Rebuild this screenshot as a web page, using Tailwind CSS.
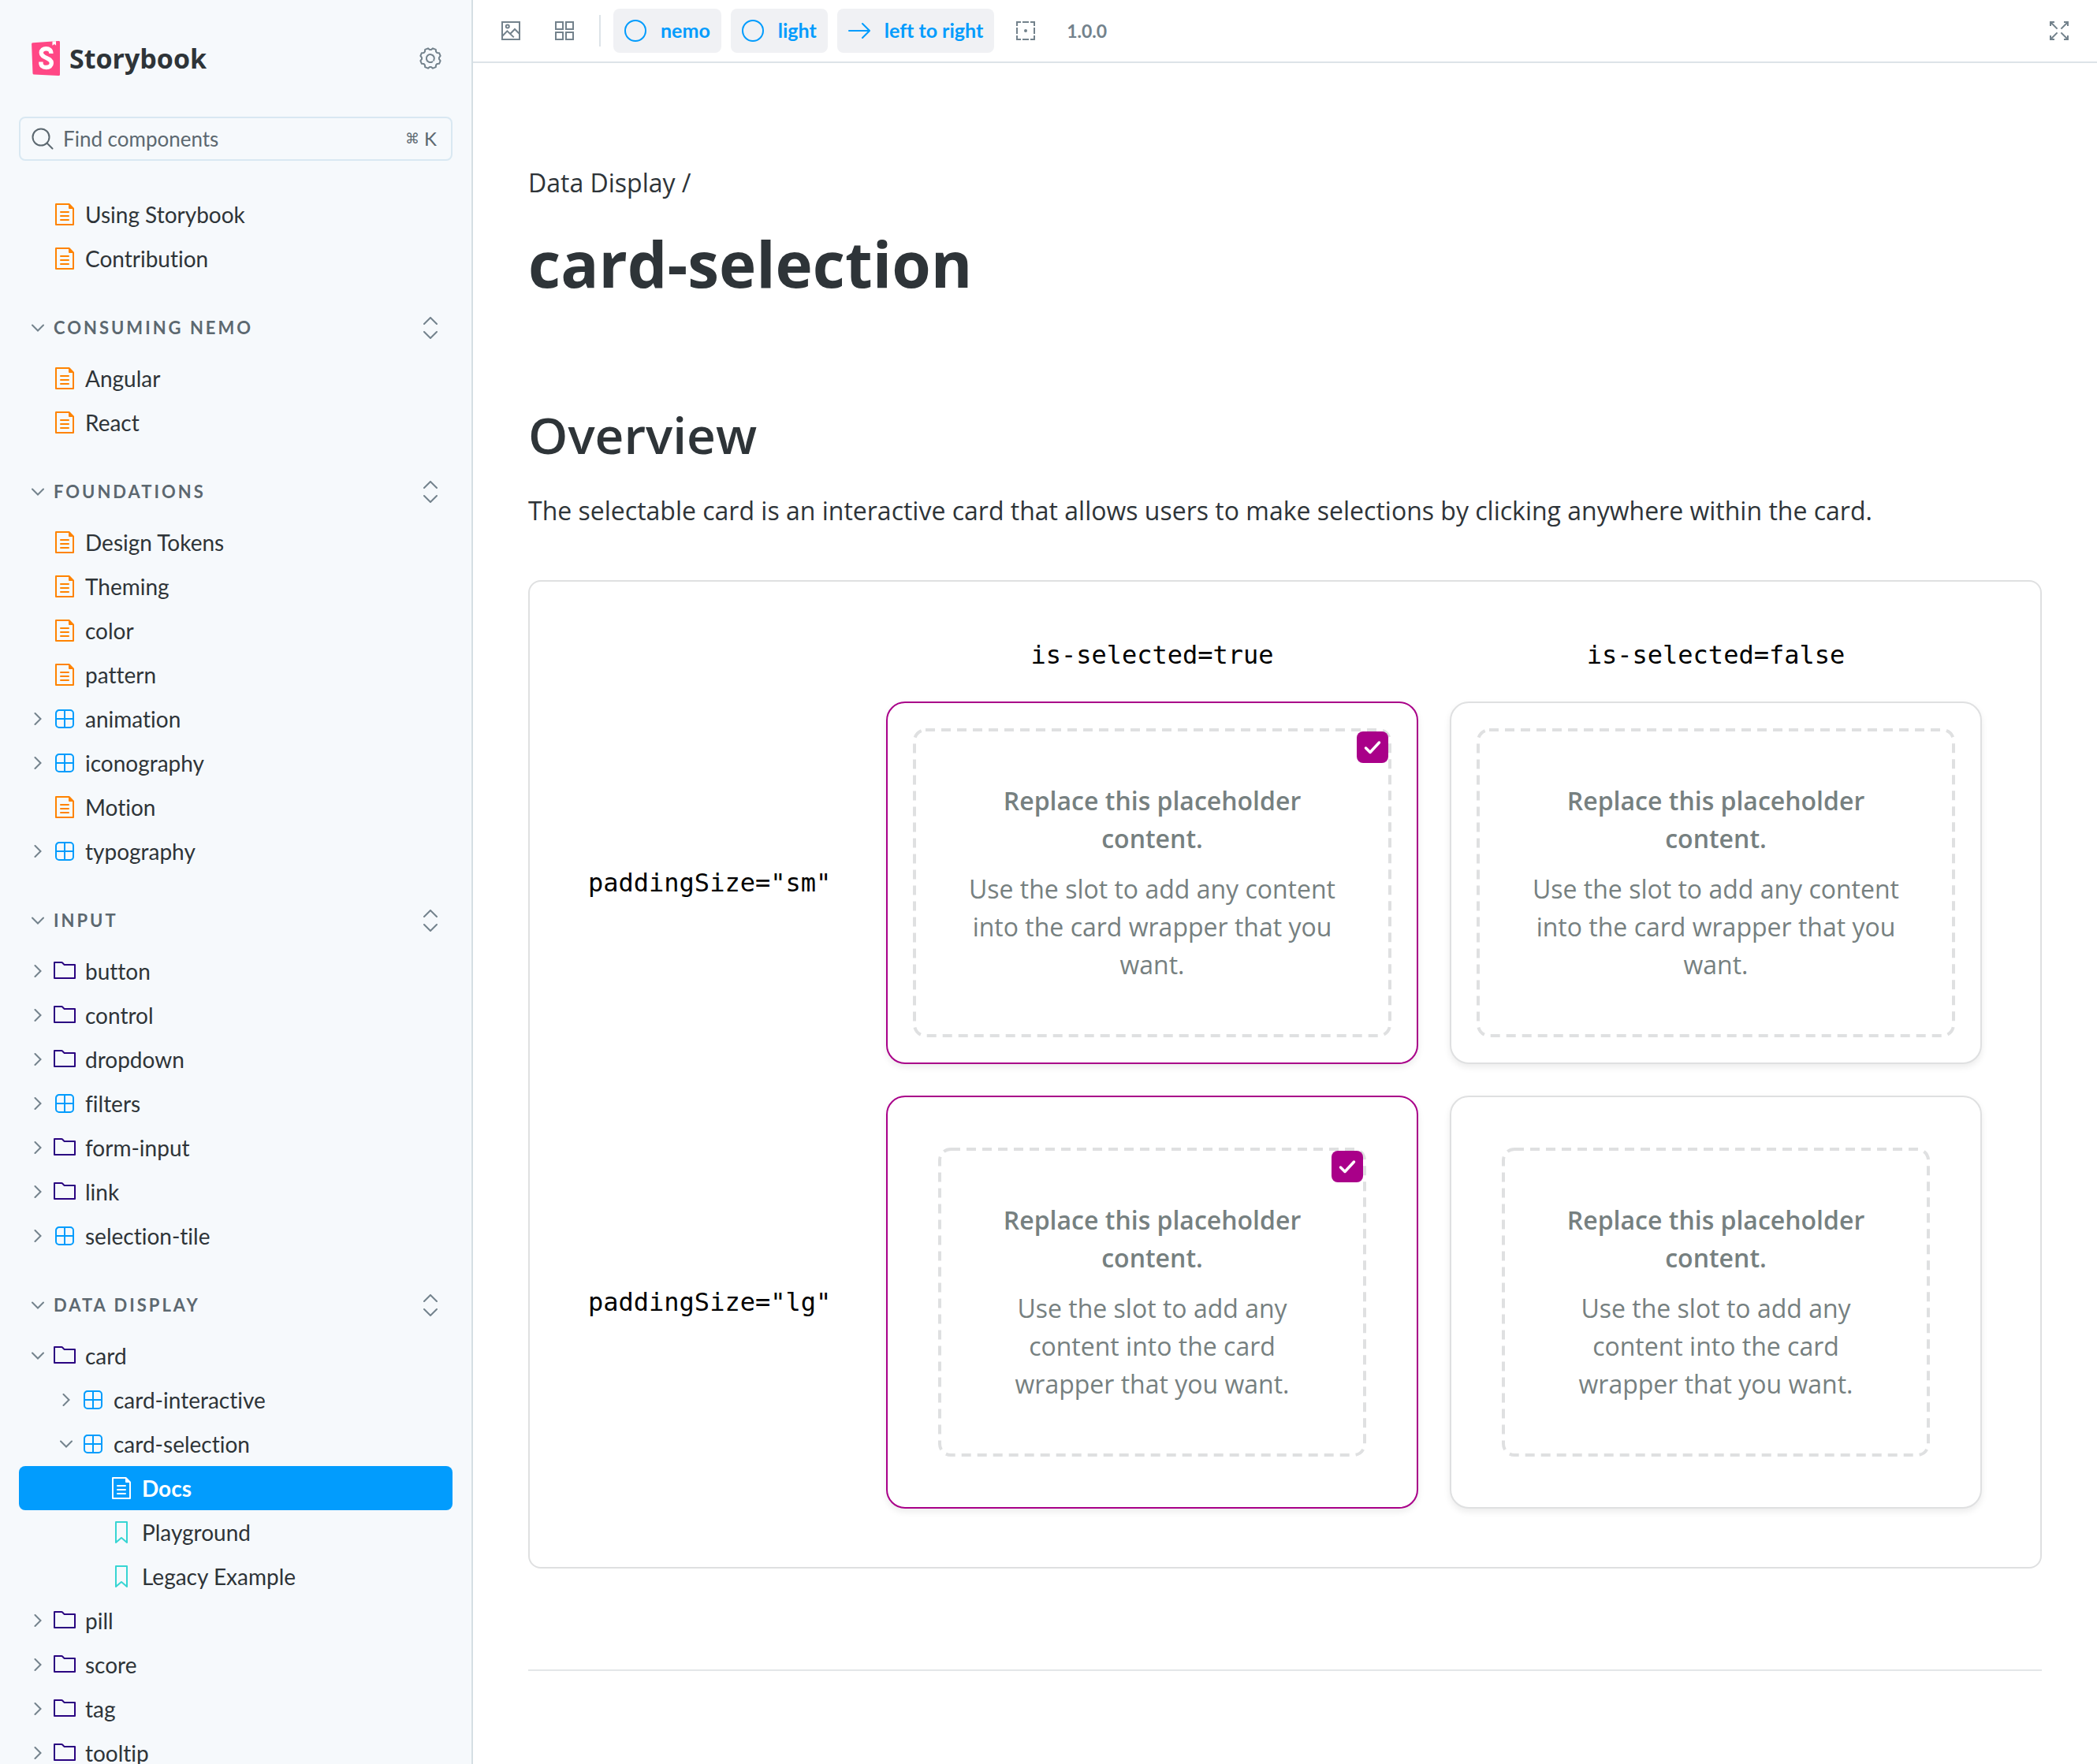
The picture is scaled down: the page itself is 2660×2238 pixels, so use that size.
<!DOCTYPE html>
<html lang="en">
<head>
<meta charset="utf-8">
<title>card-selection - Docs - Storybook</title>
<script src="https://cdn.jsdelivr.net/npm/@tailwindcss/browser@4"></script>
</head>
<body class="flex h-screen overflow-hidden bg-white font-['Open_Sans',sans-serif] text-[#2e3438]">

<svg class="hidden" aria-hidden="true">
  <symbol id="document" viewBox="0 0 14 14"><path fill="currentColor" fill-rule="evenodd" d="M1.5 0a.5.5 0 00-.5.5v13a.5.5 0 00.5.5h11a.5.5 0 00.5-.5V3.2a.5.5 0 00-.15-.35L10.15.15A.5.5 0 009.8 0H1.5zM2 1h7.5v2a.5.5 0 00.5.5h2V13H2V1z"/><path stroke="currentColor" stroke-linecap="round" d="M4.5 5.5h5M4.500 8h5M4.500 10.500h5"/></symbol>
  <symbol id="component" viewBox="0 0 14 14"><path fill="none" stroke="currentColor" d="M3.500 1.500h7a2 2 0 012 2v7a2 2 0 01-2 2h-7a2 2 0 01-2-2v-7a2 2 0 012-2zM7 1.500v11M1.500 7h11"/></symbol>
  <symbol id="folder" viewBox="0 0 14 14"><path fill="currentColor" fill-rule="evenodd" d="M6.586 3.504l-1.500-1.500H1v9h12v-7.500H6.586zm.414-1L5.793 1.297a1 1 0 00-.707-.293H.5a.5.5 0 00-.5.5v10a.5.5 0 00.5.5h13a.5.5 0 00.5-.5v-8.500a.5.5 0 00-.5-.5H7z"/></symbol>
  <symbol id="story" viewBox="0 0 14 14"><path fill="currentColor" fill-rule="evenodd" d="M3.500 0h7a.5.5 0 01.5.5v13a.5.5 0 01-.454.498.462.462 0 01-.371-.118L7 11.159l-3.175 2.720a.46.46 0 01-.379.118A.5.5 0 013 13.500V.5a.5.5 0 01.5-.5zM4 12.413l2.664-2.284a.454.454 0 01.377-.128.498.498 0 01.284.120L10 12.412V1H4v11.413z"/></symbol>
  <symbol id="chevron-down" viewBox="0 0 16 16"><path fill="none" stroke="currentColor" stroke-width="2" stroke-linecap="round" d="M1 4.500l7 7 7-7"/></symbol>
  <symbol id="chevron-right" viewBox="0 0 16 16"><path fill="none" stroke="currentColor" stroke-width="2" stroke-linecap="round" d="M4.500 1l7 7-7 7"/></symbol>
  <symbol id="expand" viewBox="0 0 28 28"><path fill="none" stroke="currentColor" stroke-width="2" stroke-linecap="round" d="M6 9l8-8 8 8M6 19l8 8 8-8"/></symbol>
  <symbol id="circle" viewBox="0 0 14 14"><circle cx="7" cy="7" r="6.500" fill="none" stroke="currentColor"/></symbol>
  <symbol id="check" viewBox="0 0 24 24"><path fill="none" stroke="currentColor" stroke-width="3.500" stroke-linecap="round" stroke-linejoin="round" d="M3.500 13l5.500 5.500L20.500 6"/></symbol>
</svg>

<aside class="w-[600px] shrink-0 overflow-hidden border-r-2 border-[#d5dfe4] bg-[#f6f9fc] px-6 font-['Lato',sans-serif] [font-variant-ligatures:none]">
  <header class="flex h-[148px] items-center justify-between pr-3.5 pl-4">
    <a href="#" class="flex items-center gap-3 font-['Open_Sans',sans-serif] text-[34px]/[44px] font-bold">
      <svg class="h-11 w-9" viewBox="0 0 36 44" aria-hidden="true">
        <path fill="#ff4785" d="M2 2.200L34 0a1.700 1.700 0 012 1.700v40.600a1.700 1.700 0 01-2 1.700L3.200 42.600a1.700 1.700 0 01-1.700-1.700L.1 4a1.700 1.700 0 011.900-1.800z"/>
        <path fill="#fff" d="M26.500.6l4.500-.3.100 5.500-2.100-1.700L26.400 5.800z"/>
        <path fill="none" stroke="#fff" stroke-width="5.400" d="M24.800 15.800c.2-4.200-2.500-6.100-6.300-6.100s-6.200 2-6.200 5.200c0 6.900 13 6 13 13.200 0 3.500-2.700 5.400-6.600 5.400-4.600 0-7-2.200-6.800-7"/>
      </svg>
      Storybook
    </a>
    <button type="button" aria-label="Shortcuts" class="text-[#73828c]">
      <svg class="size-7" viewBox="0 0 14 14" fill="none" stroke="currentColor" stroke-linejoin="round" stroke-linecap="round"><path d="M7.480 1.520L8.520.68 10.400 1.460 10.540 2.790 11.210 3.460 12.540 3.600 13.320 5.480 12.480 6.520V7.480L13.320 8.520 12.540 10.400 11.210 10.540 10.540 11.210 10.400 12.540 8.520 13.320 7.480 12.480H6.520L5.480 13.320 3.600 12.540 3.460 11.210 2.790 10.540 1.460 10.400.68 8.520 1.520 7.480V6.520L.68 5.480 1.460 3.600 2.790 3.460 3.460 2.790 3.600 1.460 5.480.68 6.520 1.520z"/><path d="M8.200 9.200a2.500 2.500 0 11.900-.9"/></svg>
    </button>
  </header>

  <label class="flex h-14 items-center gap-3 rounded-lg border-2 border-[#d9e8f2] px-3.5 text-[#5c6870]">
    <svg class="size-7 shrink-0" viewBox="0 0 28 28" fill="none" stroke="currentColor" stroke-width="2" stroke-linecap="round" aria-hidden="true"><circle cx="12" cy="12" r="10.500"/><path d="M19.500 19.500l7 7"/></svg>
    <input type="search" placeholder="Find components" aria-label="Find components" class="min-w-0 flex-1 bg-transparent text-[26px] outline-none placeholder:text-[#5c6870]">
    <kbd class="flex items-center gap-1.5 pr-1 font-['Lato',sans-serif] text-2xl"><span class="font-['DejaVu_Sans',sans-serif] text-lg">⌘</span>K</kbd>
  </label>

  <nav id="tree" aria-label="Stories" class="pt-10"></nav>
</aside>

<div class="flex min-w-0 flex-1 flex-col overflow-hidden">
  <div role="toolbar" aria-label="Canvas tools" class="flex h-20 shrink-0 items-center border-b-2 border-[#dde3e8] px-[34px] font-['Lato',sans-serif] text-[25px] font-bold text-[#73828c] [font-variant-ligatures:none]">
    <button type="button" aria-label="Change background">
      <svg class="size-7" viewBox="0 0 14 14" fill="none" stroke="currentColor"><path d="M1.500 1.500h11v11h-11z"/><circle cx="4.900" cy="4.300" r="1"/><path d="M1.500 10.500l3.200-3.300 4.200 4M6.700 8.900l2.800-2.900 3 3"/></svg>
    </button>
    <button type="button" aria-label="Apply a grid" class="ml-10">
      <svg class="size-7" viewBox="0 0 14 14" fill="none" stroke="currentColor"><path d="M1.500 1.500h4.500v4.500h-4.500zM8 1.500h4.500v4.500H8zM1.500 8h4.500v4.500h-4.500zM8 8h4.500v4.500H8z"/></svg>
    </button>
    <span class="mr-4 ml-[30px] h-10 w-0.5 bg-[#dde3e8]"></span>
    <div class="flex gap-3 text-[#029cfd]">
      <button type="button" class="flex h-14 items-center gap-[18px] rounded-lg bg-[#f0f1f4] px-3.5"><svg class="size-7"><use href="#circle"/></svg>nemo</button>
      <button type="button" class="flex h-14 items-center gap-[18px] rounded-lg bg-[#f0f1f4] px-3.5"><svg class="size-7"><use href="#circle"/></svg>light</button>
      <button type="button" class="flex h-14 items-center gap-[18px] rounded-lg bg-[#f0f1f4] px-3.5"><svg class="size-7" viewBox="0 0 14 14" fill="none" stroke="currentColor" stroke-linecap="round"><path d="M.5 7h13M9 2.500L13.500 7 9 11.500"/></svg>left to right</button>
    </div>
    <button type="button" aria-label="Apply outlines" class="ml-[26px]">
      <svg class="size-7" viewBox="0 0 14 14" fill="none" stroke="currentColor"><path d="M1.500 4V1.500H4M5 1.500h4M10 1.500h2.500V4M12.500 5v4M12.500 10v2.500H10M9 12.500H5M4 12.500H1.500V10M1.500 9V5"/><circle cx="7" cy="7" r="1" fill="currentColor" stroke="none"/></svg>
    </button>
    <span class="ml-[38px] text-[23px]">1.0.0</span>
    <button type="button" aria-label="Go full screen" class="ml-auto">
      <svg class="size-7" viewBox="0 0 14 14" fill="none" stroke="currentColor"><path d="M1.500 4V1.500H4M1.500 1.500l4.300 4.300M10 1.500h2.500V4M12.500 1.500L8.200 5.800M12.500 10v2.500H10M12.500 12.500L8.200 8.200M4 12.500H1.500V10M1.500 12.500l4.300-4.300"/></svg>
    </button>
  </div>

  <main class="px-[70px] pt-32 text-[32px]/[48px]">
    <p>Data Display /</p>
    <h1 class="mt-6 text-[80px]/[108px] font-bold">card-selection</h1>
    <h2 class="mt-30 text-[64px]/[88px] font-semibold">Overview</h2>
    <p class="mt-7">The selectable card is an interactive card that allows users to make selections by clicking anywhere within the card.</p>

    <section class="mt-16 rounded-2xl border-2 border-[#dfe0e1] p-[54px]">
      <table class="w-full table-fixed">
        <thead class="font-['DejaVu_Sans_Mono',monospace] text-[32px]/[38px] text-black">
          <tr>
            <td class="w-[378px]"></td>
            <th scope="col" class="p-5 font-normal">is-selected=true</th>
            <th scope="col" class="p-5 font-normal">is-selected=false</th>
          </tr>
        </thead>
        <tbody id="cards" class="text-center text-[#768080]"></tbody>
      </table>
    </section>

    <hr class="mt-32 border-t-2 border-[#e3e6e8]">
  </main>
</div>

<script>
  const tree = [
    { items: [['document', 'Using Storybook'], ['document', 'Contribution']] },
    { title: 'Consuming Nemo', items: [['document', 'Angular'], ['document', 'React']] },
    { title: 'Foundations', items: [['document', 'Design Tokens'], ['document', 'Theming'], ['document', 'color'], ['document', 'pattern'], ['component', 'animation', 'right'], ['component', 'iconography', 'right'], ['document', 'Motion'], ['component', 'typography', 'right']] },
    { title: 'Input', items: [['folder', 'button', 'right'], ['folder', 'control', 'right'], ['folder', 'dropdown', 'right'], ['component', 'filters', 'right'], ['folder', 'form-input', 'right'], ['folder', 'link', 'right'], ['component', 'selection-tile', 'right']] },
    { title: 'Data Display', items: [['folder', 'card', 'down'], ['component', 'card-interactive', 'right', 1], ['component', 'card-selection', 'down', 1], ['document', 'Docs', '', 2, true], ['story', 'Playground', '', 2], ['story', 'Legacy Example', '', 2], ['folder', 'pill', 'right'], ['folder', 'score', 'right'], ['folder', 'tag', 'right'], ['folder', 'tooltip', 'right']] },
  ];
  const indent = ['pl-4', 'pl-[52px]', 'pl-[88px]'];
  const tint = { document: 'text-[#ff8300]', component: 'text-[#029cfd]', folder: 'text-[#2a0481]', story: 'text-[#37d5d3]' };

  const row = ([icon, label, chevron, level = 0, active]) => `
    <li><a href="#" class="flex h-14 items-center rounded-lg text-[28px] ${indent[level]} ${active ? 'bg-[#029cfd] font-bold text-white' : ''}">
      <svg class="mr-3 size-4 text-[#73828c]">${chevron ? `<use href="#chevron-${chevron}"/>` : ''}</svg>
      <svg class="mr-3 size-7 ${active ? 'text-white' : tint[icon]}"><use href="#${icon}"/></svg>${label}</a></li>`;

  document.getElementById('tree').innerHTML = tree.map(({ title, items }) => `
    ${title ? `<div class="mt-8 mb-2 flex h-14 items-center justify-between pr-3.5 pl-4">
      <button type="button" class="flex items-center gap-3 text-[22px] font-bold tracking-[3px] text-[#5c6870] uppercase"><svg class="size-4 text-[#73828c]"><use href="#chevron-down"/></svg><span class="pb-0.5">${title}</span></button>
      <button type="button" aria-label="Expand all" class="text-[#73828c]"><svg class="size-7"><use href="#expand"/></svg></button>
    </div>` : ''}<ul>${items.map(row).join('')}</ul>`).join('');

  const sizes = [
    { name: 'sm', pad: 'p-8', box: 'top-9 right-9' },
    { name: 'lg', pad: 'p-16', box: 'top-17 right-17' },
  ];
  const card = ({ name, pad, box }, selected) => `
    <td class="p-5">
      <div class="relative rounded-3xl border-2 bg-white shadow-[0_4px_8px_rgba(0,0,0,0.08)] ${pad} ${selected ? 'border-[#a90089]' : 'border-[#dfe0e1]'}">
        <div class="relative p-17">
          <svg class="absolute inset-0 size-full text-[#dfe0e1]" aria-hidden="true"><rect x="2" y="2" rx="14" class="h-[calc(100%-4px)] w-[calc(100%-4px)]" fill="none" stroke="currentColor" stroke-width="4" stroke-dasharray="12 8"/></svg>
          <p class="font-semibold">Replace this placeholder content.</p>
          <p class="mt-4">Use the slot to add any content into the card wrapper that you want.</p>
        </div>
        ${selected ? `<label class="absolute grid size-10 place-items-center ${box}">
          <input type="checkbox" checked aria-label="Selected, ${name}" class="col-start-1 row-start-1 size-10 appearance-none rounded-lg bg-[#a90089]">
          <svg class="col-start-1 row-start-1 size-6 text-white"><use href="#check"/></svg>
        </label>` : ''}
      </div>
    </td>`;
  document.getElementById('cards').innerHTML = sizes.map(size => `
    <tr>
      <th scope="row" class="px-5 text-left font-['DejaVu_Sans_Mono',monospace] text-[32px]/[38px] font-normal text-black">paddingSize="${size.name}"</th>
      ${card(size, true)}${card(size, false)}
    </tr>`).join('');
</script>
</body>
</html>
